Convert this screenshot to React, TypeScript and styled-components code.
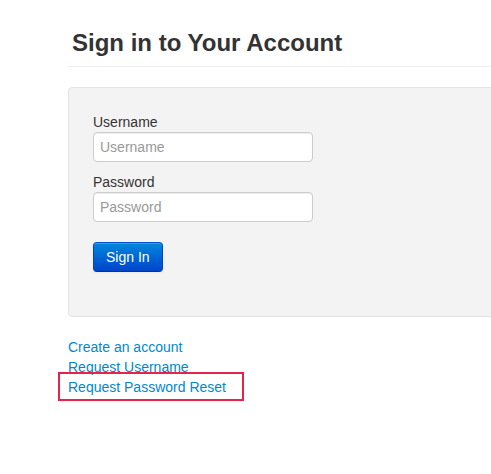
import React from "react";
import styled, { createGlobalStyle } from "styled-components";

const GlobalStyle = createGlobalStyle`
  html {
    overflow: hidden;
  }
  body {
    margin: 0;
    background: #fff;
    font-family: "Liberation Sans", Arial, sans-serif;
    font-size: 14px;
    line-height: 20px;
    color: #333;
  }
`;

const Page = styled.div`
  width: 440px;
  padding: 27px 0 60px 68px;
`;

const Header = styled.div`
  border-bottom: 1px solid #eee;
  padding: 0 0 7px 4px;
`;

const Title = styled.h1`
  margin: 0;
  font-size: 24px;
  line-height: 32px;
  font-weight: bold;
  color: #333;
`;

const Panel = styled.form`
  margin-top: 20px;
  background: #f3f3f3;
  border: 1px solid #e3e3e3;
  border-radius: 4px;
  padding: 24px 24px 44px;
`;

const Label = styled.label`
  display: block;
  color: #333;
`;

const Input = styled.input`
  display: block;
  box-sizing: border-box;
  width: 220px;
  height: 30px;
  margin: 0 0 10px;
  padding: 4px 6px;
  border: 1px solid #ccc;
  border-radius: 4px;
  background: #fff;
  font-family: inherit;
  font-size: 14px;
  color: #555;
  box-shadow: inset 0 1px 1px rgba(0, 0, 0, 0.075);

  &::placeholder {
    color: #999;
  }
`;

const Button = styled.button`
  display: block;
  box-sizing: border-box;
  margin-top: 20px;
  height: 30px;
  padding: 4px 12px;
  border: 1px solid #0044cc;
  border-color: #0055cc #0044cc #003399;
  border-radius: 4px;
  background: linear-gradient(to bottom, #0088dd, #0044cc);
  color: #fff;
  font-family: inherit;
  font-size: 14px;
  line-height: 20px;
  box-shadow: inset 0 1px 0 rgba(255, 255, 255, 0.2), 0 1px 2px rgba(0, 0, 0, 0.05);
`;

const Links = styled.ul`
  list-style: none;
  margin: 20px 0 0;
  padding: 0;
`;

const Item = styled.li`
  position: relative;
`;

const Link = styled.a`
  color: #0088cc;
  text-decoration: none;
`;

const Highlight = styled.span`
  position: absolute;
  left: -10px;
  top: -5px;
  width: 186px;
  height: 29px;
  box-sizing: border-box;
  border: 2px solid #e5244b;
  pointer-events: none;
`;

export default function App() {
  return (
    <>
      <GlobalStyle />
      <Page>
        <Header>
          <Title>Sign in to Your Account</Title>
        </Header>
        <Panel onSubmit={(e) => e.preventDefault()}>
          <Label htmlFor="username">Username</Label>
          <Input id="username" placeholder="Username" />
          <Label htmlFor="password">Password</Label>
          <Input id="password" type="password" placeholder="Password" />
          <Button type="submit">Sign In</Button>
        </Panel>
        <Links>
          <Item>
            <Link href="#">Create an account</Link>
          </Item>
          <Item>
            <Link href="#">Request Username</Link>
          </Item>
          <Item>
            <Link href="#">Request Password Reset</Link>
            <Highlight />
          </Item>
        </Links>
      </Page>
    </>
  );
}
